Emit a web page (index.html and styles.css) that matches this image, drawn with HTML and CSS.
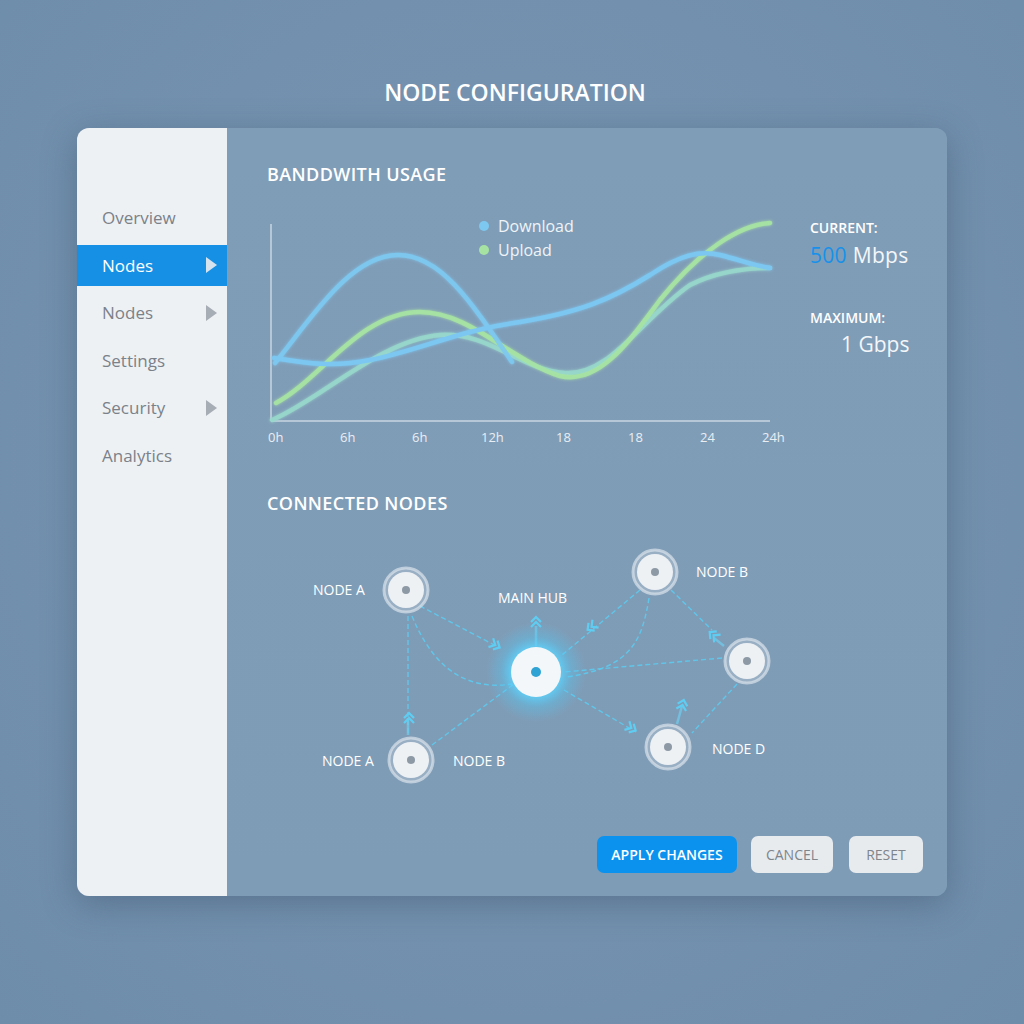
FILE: index.html
```html
<!DOCTYPE html>
<html>
<head>
<meta charset="utf-8">
<link rel="stylesheet" href="styles.css">
</head>
<body>
<div class="page">
  <header class="top"><h1 class="title">NODE CONFIGURATION</h1></header>
  <div class="card">
    <nav class="sidebar">
      <div class="nav-item">Overview</div>
      <div class="nav-item active">Nodes<span class="tri"></span></div>
      <div class="nav-item">Nodes<span class="tri"></span></div>
      <div class="nav-item">Settings</div>
      <div class="nav-item">Security<span class="tri"></span></div>
      <div class="nav-item">Analytics</div>
    </nav>
    <main class="main">
      <h2 class="section-title">BANDDWITH USAGE</h2>
      <div class="chart-row">
        <svg class="chart" width="523" height="240" viewBox="267 212 523 240">
          <defs>
            <filter id="soft" x="-10%" y="-10%" width="120%" height="120%">
              <feGaussianBlur stdDeviation="1.4" result="b"/>
              <feMerge><feMergeNode in="b"/><feMergeNode in="SourceGraphic"/></feMerge>
            </filter>
          </defs>
          <line x1="271" y1="224" x2="271" y2="421" class="axis"/>
          <line x1="271" y1="421" x2="770" y2="421" class="axis"/>
          <g fill="none" stroke-width="4.5" stroke-linecap="round" filter="url(#soft)">
            <path d="M272,420 C320,400 380,340 440,335 C490,332 520,370 565,373 C610,376 640,320 690,285 C720,270 750,268 770,268" stroke="#98d8cb" opacity="0.85"/>
            <path d="M276,403 C320,380 360,312 420,312 C470,312 510,360 560,376 C600,385 630,340 660,300 C700,250 740,225 770,223" stroke="#a6e3a2" opacity="0.9"/>
            <path d="M275,363 C310,320 350,255 398,255 C440,255 470,300 512,362" stroke="#7dc8f0" opacity="0.9"/>
            <path d="M274,358 C300,362 330,368 370,360 C420,350 460,330 520,322 C580,312 610,300 650,275 C680,255 700,250 720,255 C740,260 755,266 770,268" stroke="#7cc7f1"/>
          </g>
          <circle cx="484" cy="226" r="5" fill="#7dc8f0"/>
          <circle cx="484" cy="250" r="5" fill="#a6e3a2"/>
          <text x="498" y="232" class="legend">Download</text>
          <text x="498" y="256" class="legend">Upload</text>
          <g class="tick">
            <text x="268" y="442">0h</text>
            <text x="340" y="442">6h</text>
            <text x="412" y="442">6h</text>
            <text x="481" y="442">12h</text>
            <text x="556" y="442">18</text>
            <text x="628" y="442">18</text>
            <text x="700" y="442">24</text>
            <text x="762" y="442">24h</text>
          </g>
        </svg>
        <div class="stats">
          <div class="stat-label">CURRENT:</div>
          <div class="stat-value"><span class="accent">500</span> Mbps</div>
          <div class="stat-label second">MAXIMUM:</div>
          <div class="stat-value indent">1 Gbps</div>
        </div>
      </div>
      <h2 class="section-title nodes-title">CONNECTED NODES</h2>
      <svg class="network" width="540" height="285" viewBox="267 525 540 285">
        <defs>
          <radialGradient id="glow">
            <stop offset="0.45" stop-color="#5fd6ff" stop-opacity="0.9"/>
            <stop offset="0.7" stop-color="#52c8f5" stop-opacity="0.35"/>
            <stop offset="1" stop-color="#52c8f5" stop-opacity="0"/>
          </radialGradient>
          <g id="chev">
            <path d="M-5,2 L0,-3 L5,2 M-5,7 L0,2 L5,7" fill="none" stroke="#5fcdf2" stroke-width="2.2"/>
          </g>
        </defs>
        <g class="edges">
          <path d="M420,606 L500,648"/>
          <path d="M412,616 C430,660 460,692 512,684"/>
          <path d="M408,616 L408,734"/>
          <path d="M432,745 L514,684"/>
          <path d="M640,590 L562,655"/>
          <path d="M649,598 C642,640 632,668 566,677"/>
          <path d="M671,590 L712,630"/>
          <path d="M722,658 L564,672"/>
          <path d="M564,690 L636,732"/>
          <path d="M737,684 L692,733"/>
        </g>
        <g class="solid">
          <path d="M536,646 L536,626"/>
          <path d="M408,735 L408,718"/>
          <path d="M724,646 L714,638"/>
          <path d="M677,724 L682,706"/>
        </g>
        <use href="#chev" transform="translate(497,646) rotate(118)"/>
        <use href="#chev" transform="translate(536,620)"/>
        <use href="#chev" transform="translate(409,716)"/>
        <use href="#chev" transform="translate(590,628) rotate(-128)"/>
        <use href="#chev" transform="translate(712,634) rotate(-50)"/>
        <use href="#chev" transform="translate(633,729) rotate(120)"/>
        <use href="#chev" transform="translate(683,703) rotate(15)"/>

        <g class="node">
          <circle cx="406" cy="590" r="22" class="ring"/>
          <circle cx="406" cy="590" r="18" class="disc"/>
          <circle cx="406" cy="590" r="4" class="dot"/>
        </g>
        <g class="node">
          <circle cx="655" cy="572" r="22" class="ring"/>
          <circle cx="655" cy="572" r="18" class="disc"/>
          <circle cx="655" cy="572" r="4" class="dot"/>
        </g>
        <g class="node">
          <circle cx="747" cy="661" r="22" class="ring"/>
          <circle cx="747" cy="661" r="18" class="disc"/>
          <circle cx="747" cy="661" r="4" class="dot"/>
        </g>
        <g class="node">
          <circle cx="668" cy="747" r="22" class="ring"/>
          <circle cx="668" cy="747" r="18" class="disc"/>
          <circle cx="668" cy="747" r="4" class="dot"/>
        </g>
        <g class="node">
          <circle cx="411" cy="760" r="22" class="ring"/>
          <circle cx="411" cy="760" r="18" class="disc"/>
          <circle cx="411" cy="760" r="4" class="dot"/>
        </g>
        <circle cx="536" cy="672" r="50" fill="url(#glow)"/>
        <circle cx="536" cy="672" r="25" fill="#f4f7f9"/>
        <circle cx="536" cy="672" r="5" fill="#2fa3d4"/>

        <g class="nlabel">
          <text x="313" y="595">NODE A</text>
          <text x="498" y="603">MAIN HUB</text>
          <text x="696" y="577">NODE B</text>
          <text x="322" y="766">NODE A</text>
          <text x="453" y="766">NODE B</text>
          <text x="712" y="754">NODE D</text>
        </g>
      </svg>
      <div class="actions">
        <button class="btn primary">APPLY CHANGES</button>
        <button class="btn ghost cancel">CANCEL</button>
        <button class="btn ghost reset">RESET</button>
      </div>
    </main>
  </div>
</div>
</body>
</html>
```
FILE: styles.css
```css
html, body {
  margin: 0;
  padding: 0;
}
body {
  width: 1024px;
  height: 1024px;
  background: radial-gradient(ellipse at 50% 45%, #7896b2 0%, #7391ae 60%, #6e8dab 100%);
  font-family: "Open Sans", "Noto Sans", sans-serif;
  overflow: hidden;
}
.page {
  display: flex;
  flex-direction: column;
}
.top {
  height: 128px;
  display: flex;
  justify-content: center;
}
.title {
  margin: 77px 0 0 6px;
  font-size: 23px;
  line-height: 30px;
  font-weight: 600;
  color: #ffffff;
}
.card {
  margin-left: 77px;
  width: 870px;
  height: 768px;
  border-radius: 12px;
  display: flex;
  overflow: hidden;
  background: #809db7;
  box-shadow: 0 8px 34px rgba(50, 70, 95, 0.4);
}
.sidebar {
  width: 150px;
  flex: none;
  background: #eef1f4;
  padding-top: 69px;
  display: flex;
  flex-direction: column;
  gap: 6.6px;
}
.nav-item {
  height: 41px;
  display: flex;
  align-items: center;
  justify-content: space-between;
  padding: 0 10px 0 25px;
  font-size: 17px;
  color: #7b8189;
}
.nav-item.active {
  background: #1690e4;
  color: #ffffff;
}
.tri {
  width: 0;
  height: 0;
  border-top: 8px solid transparent;
  border-bottom: 8px solid transparent;
  border-left: 11px solid #a7adb4;
}
.nav-item.active .tri {
  border-left-color: #d7e3ee;
}
.main {
  flex: 1;
  display: flex;
  flex-direction: column;
  padding: 34px 24px 23px 40px;
  background: linear-gradient(180deg, #809db7 0%, #7f9cb6 100%);
}
.section-title {
  margin: 0;
  font-size: 18px;
  line-height: 24px;
  font-weight: 600;
  letter-spacing: 0.4px;
  color: #ffffff;
}
.chart-row {
  display: flex;
  margin-top: 26px;
}
.chart {
  display: block;
  flex: none;
}
.axis {
  stroke: #c9d6e2;
  stroke-width: 1.5;
}
.legend {
  font-family: "Open Sans", sans-serif;
  font-size: 16px;
  fill: #eef4f8;
}
.tick text {
  font-family: "Open Sans", sans-serif;
  font-size: 13px;
  fill: #e8eef4;
}
.stats {
  margin-left: 20px;
  padding-top: 7px;
  color: #ffffff;
}
.stat-label {
  font-size: 14px;
  line-height: 18px;
  font-weight: 600;
}
.stat-label.second {
  margin-top: 39px;
}
.stat-value {
  font-size: 21px;
  line-height: 30px;
  margin-top: 3px;
  color: #f3f6f9;
  letter-spacing: 0.3px;
}
.stat-value.indent {
  padding-left: 31px;
  margin-top: 2px;
  letter-spacing: 0;
}
.accent {
  color: #1791ea;
}
.nodes-title {
  margin-top: 39px;
}
.network {
  display: block;
  margin-top: 10px;
}
.edges path {
  fill: none;
  stroke: #5ccbf0;
  stroke-width: 1.4;
  stroke-dasharray: 5 3;
  opacity: 0.9;
}
.solid path {
  fill: none;
  stroke: #6fcdf0;
  stroke-width: 2.5;
  opacity: 0.7;
}
.ring {
  fill: rgba(200, 212, 224, 0.35);
  stroke: rgba(225, 232, 239, 0.65);
  stroke-width: 3;
}
.disc {
  fill: #eef1f4;
}
.dot {
  fill: #8d99a5;
}
.nlabel text {
  font-family: "Open Sans", sans-serif;
  font-size: 14px;
  fill: #ffffff;
}
.actions {
  margin-top: auto;
  display: flex;
  justify-content: flex-end;
  gap: 14px;
}
.btn {
  height: 37px;
  border: none;
  border-radius: 7px;
  font-family: "Open Sans", sans-serif;
  font-size: 14px;
  font-weight: 600;
  padding: 0;
}
.btn.primary {
  width: 140px;
  background: #0b92ee;
  color: #ffffff;
  margin-right: -1px;
}
.btn.ghost {
  background: #e8ebee;
  color: #7e858c;
  font-weight: 400;
}
.btn.cancel {
  width: 82px;
  margin-left: 1px;
}
.btn.reset {
  width: 74px;
  margin-left: 2px;
}
```
